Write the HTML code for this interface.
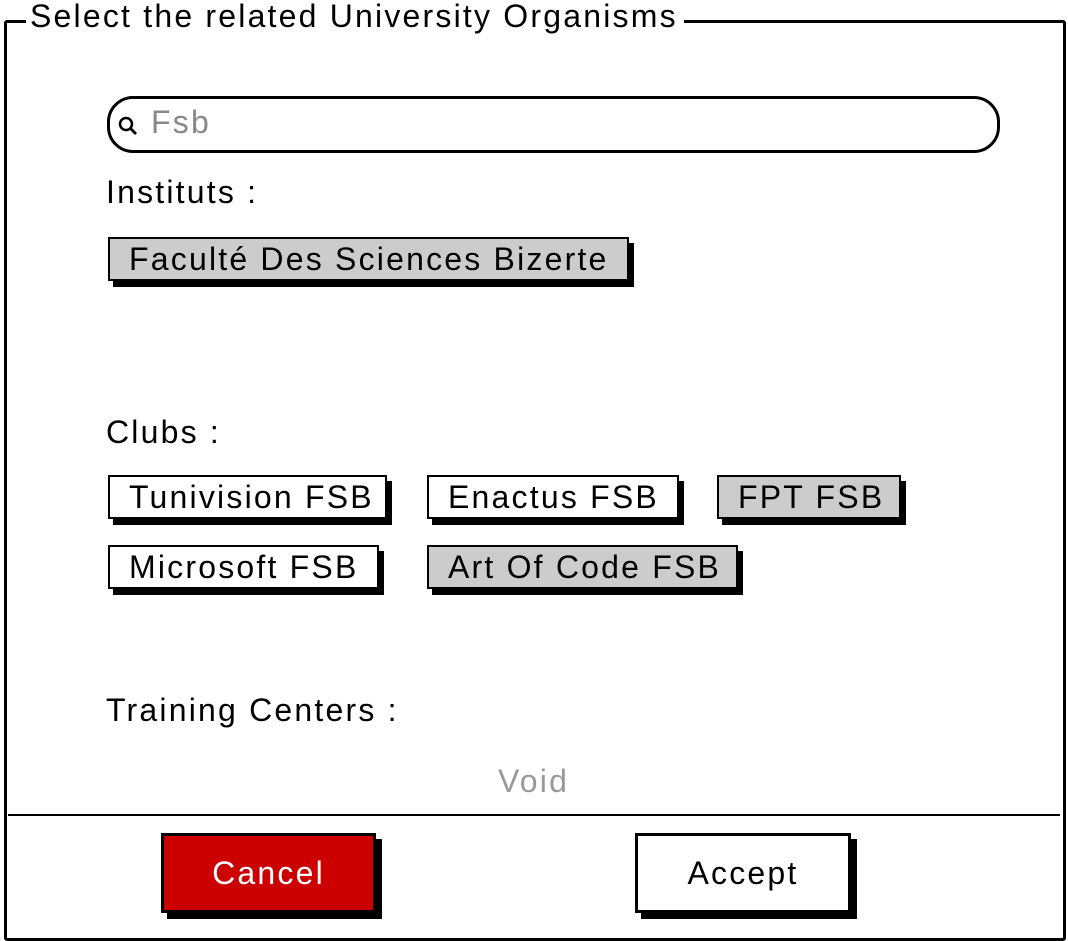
<!DOCTYPE html>
<html><head><meta charset="utf-8"><style>
body{margin:0;width:1068px;height:940px;background:#fff;position:relative;overflow:hidden;font-family:"Liberation Sans",sans-serif;color:#000;letter-spacing:2.2px}
.a{position:absolute;white-space:nowrap}
.frame{left:4px;top:20px;width:1056px;height:915px;border:3px solid #000;border-radius:3px}
.title{left:26px;top:-3px;background:#fff;padding:0 6px 0 4px;font-size:32px;line-height:38px}
.lbl{font-size:32px;line-height:36px}
.tag{border:2.5px solid #000;box-shadow:5px 6px 0 #000;font-size:32px;line-height:40px;box-sizing:border-box;height:44px;padding-left:19px;background:#fff}
.g{background:#ccc}
.btn{border:3px solid #000;box-shadow:6px 6px 0 #000;font-size:32px;text-align:center;line-height:74px;box-sizing:border-box;height:80px}
</style></head><body>
<div class="a frame"></div>
<div class="a title">Select the related University Organisms</div>
<div class="a" style="left:107px;top:96px;width:893px;height:57px;border:3px solid #000;border-radius:26px;box-sizing:border-box"></div>
<svg class="a" style="left:117px;top:115px" width="22" height="22" viewBox="0 0 22 22"><circle cx="9" cy="9" r="6" fill="none" stroke="#000" stroke-width="2.5"/><line x1="13" y1="13" x2="19" y2="19" stroke="#000" stroke-width="2.8"/></svg>
<div class="a lbl" style="left:151px;top:104px;color:#888">Fsb</div>
<div class="a lbl" style="left:106px;top:174px">Instituts :</div>
<div class="a tag g" style="left:108px;top:237px;width:521px">Faculté Des Sciences Bizerte</div>
<div class="a lbl" style="left:106px;top:414px">Clubs :</div>
<div class="a tag" style="left:108px;top:475px;width:279px">Tunivision FSB</div>
<div class="a tag" style="left:427px;top:475px;width:252px">Enactus FSB</div>
<div class="a tag g" style="left:717px;top:475px;width:184px">FPT FSB</div>
<div class="a tag" style="left:108px;top:545px;width:271px">Microsoft FSB</div>
<div class="a tag g" style="left:427px;top:545px;width:311px">Art Of Code FSB</div>
<div class="a lbl" style="left:106px;top:692px">Training Centers :</div>
<div class="a lbl" style="left:498px;top:763px;color:#999">Void</div>
<div class="a" style="left:8px;top:814px;width:1052px;height:2px;background:#000"></div>
<div class="a btn" style="left:161px;top:833px;width:215px;background:#cc0000;color:#fff">Cancel</div>
<div class="a btn" style="left:635px;top:833px;width:216px;background:#fff">Accept</div>
</body></html>
